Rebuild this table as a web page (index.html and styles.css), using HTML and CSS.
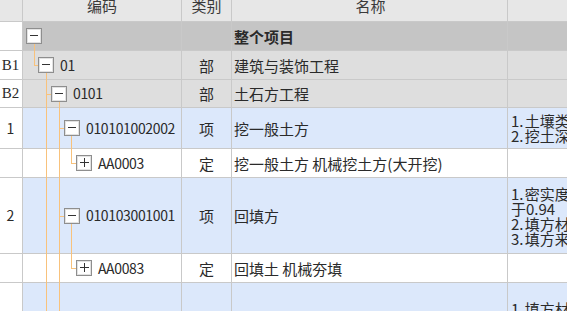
FILE: index.html
```html
<!DOCTYPE html>
<html lang="zh-CN">
<head>
  <meta charset="UTF-8" />
  <title>分部分项工程</title>
  <link rel="stylesheet" href="styles.css">
</head>
<body>

  <div class="sheet">
    <div class="row head">
      <div class="c num"></div>
      <div class="c code">编码</div>
      <div class="c kind">类别</div>
      <div class="c name">名称</div>
      <div class="c desc"></div>
    </div>

    <!-- 整个项目 -->
    <div class="row total h29">
      <div class="c num"></div>
      <div class="c code lv0">
        <span class="g gb x0"></span>
        <i class="tg minus"></i>
      </div>
      <div class="c kind"></div>
      <div class="c name"><b>整个项目</b></div>
      <div class="c desc"></div>
    </div>

    <div class="row part h29">
      <div class="c num bn">B1</div>
      <div class="c code lv1">
        <span class="g gt x0"></span><span class="g h x0"></span>
        <span class="g gb x1"></span>
        <i class="tg minus"></i><span class="no">01</span>
      </div>
      <div class="c kind">部</div>
      <div class="c name">建筑与装饰工程</div>
      <div class="c desc"></div>
    </div>

    <div class="row part h28">
      <div class="c num bn">B2</div>
      <div class="c code lv2">
        <span class="g gf x1"></span><span class="g h x1"></span>
        <span class="g gb x2"></span>
        <i class="tg minus"></i><span class="no">0101</span>
      </div>
      <div class="c kind">部</div>
      <div class="c name">土石方工程</div>
      <div class="c desc"></div>
    </div>

    <div class="row item h41">
      <div class="c num">1</div>
      <div class="c code lv3">
        <span class="g gf x1"></span><span class="g gf x2"></span><span class="g h x2"></span>
        <span class="g gb x3"></span>
        <i class="tg minus"></i><span class="no">010101002002</span>
      </div>
      <div class="c kind">项</div>
      <div class="c name">挖一般土方</div>
      <div class="c desc">1. 土壤类别:三类土<br>2. 挖土深度:2m以内</div>
    </div>

    <div class="row quota h29">
      <div class="c num"></div>
      <div class="c code lv4">
        <span class="g gf x1"></span><span class="g gf x2"></span>
        <span class="g gt x3"></span><span class="g h x3"></span>
        <i class="tg plus"></i><span class="no">AA0003</span>
      </div>
      <div class="c kind">定</div>
      <div class="c name">挖一般土方 机械挖土方(大开挖)</div>
      <div class="c desc"></div>
    </div>

    <div class="row item h76">
      <div class="c num">2</div>
      <div class="c code lv3">
        <span class="g gf x1"></span><span class="g gf x2"></span><span class="g h x2"></span>
        <span class="g gb x3"></span>
        <i class="tg minus"></i><span class="no">010103001001</span>
      </div>
      <div class="c kind">项</div>
      <div class="c name">回填方</div>
      <div class="c desc">1. 密实度要求:压实系数不小<br>于0.94<br>2. 填方材料品种:素土<br>3. 填方来源、运距:就近</div>
    </div>

    <div class="row quota h29">
      <div class="c num"></div>
      <div class="c code lv4">
        <span class="g gf x1"></span><span class="g gf x2"></span>
        <span class="g gt x3"></span><span class="g h x3"></span>
        <i class="tg plus"></i><span class="no">AA0083</span>
      </div>
      <div class="c kind">定</div>
      <div class="c name">回填土 机械夯填</div>
      <div class="c desc"></div>
    </div>

    <div class="row item last">
      <div class="c num"></div>
      <div class="c code lv3">
        <span class="g gf x1"></span><span class="g gf x2"></span>
      </div>
      <div class="c kind"></div>
      <div class="c name"></div>
      <div class="c desc top">1. 填方材料品种:级配砂石<br>2. 填方来源、运距:外购</div>
    </div>
  </div>

</body>
</html>
```

FILE: styles.css
```css
body {
  margin: 0;
  overflow: hidden;
  background: #fff;
  font-family: "Noto Sans CJK SC", sans-serif;
  font-size: 15px;
  color: #2a2a2a;
}

.sheet {
  width: 800px;
}

.row {
  display: grid;
  grid-template-columns: 23px 159px 50px 276px 292px;
  border-bottom: 1px solid #c9c9c9;
  box-sizing: border-box;
}

.h28 { height: 28px; }
.h29 { height: 29px; }
.h41 { height: 41px; }
.h76 { height: 76px; }
.last { height: 60px; }

.c {
  border-right: 1px solid #c9c9c9;
  display: flex;
  align-items: center;
  white-space: nowrap;
  overflow: hidden;
  line-height: 15px;
}

/* column header, scrolled a little out of view */
.head {
  height: 22px;
  background: #e7e7e7;
}

.head .c {
  justify-content: center;
  align-items: flex-start;
  line-height: 11px;
  color: #3a3a3a;
}

.total { background: #c5c5c5; }
.part { background: #dedede; }
.item { background: #dce8fb; }
.quota { background: #fff; }

.num {
  background: #fff;
  justify-content: center;
  font-size: 14px;
  padding-right: 1px;
}

.head .num { background: #e7e7e7; }

.bn {
  font-family: "Liberation Serif", serif;
  font-size: 15px;
}

.kind {
  justify-content: center;
}

.name {
  padding-left: 2px;
}

.name b {
  font-weight: bold;
}

.desc {
  padding-left: 3px;
  word-spacing: -2px;
}

.desc.top {
  align-items: flex-start;
  padding-top: 18px;
}

/* tree column */
.code {
  position: relative;
  overflow: visible;
}

.lv0 { padding-left: 3px; }
.lv1 { padding-left: 15px; }
.lv2 { padding-left: 28px; }
.lv3 { padding-left: 41px; }
.lv4 { padding-left: 53px; }

.no {
  margin-left: 6px;
  font-size: 14px;
  letter-spacing: -0.35px;
}

/* guide lines */
.g {
  position: absolute;
  width: 1px;
  background: #f8c27c;
}

.gf { top: 0; bottom: -1px; }
.gt { top: 0; height: 50%; }
.gb { top: 50%; bottom: -1px; }

.g.h {
  top: 50%;
  height: 1px;
  width: 5px;
}

.x0 { left: 11px; }
.x1 { left: 23px; }
.x2 { left: 36px; }
.x3 { left: 48px; }

.g.h.x0 { width: 4px; }

/* expand / collapse toggle */
.tg {
  position: relative;
  z-index: 1;
  flex: none;
  width: 14px;
  height: 14px;
  border: 1px solid #8e8e8e;
  box-shadow: inset 0 0 0 1px #e2e2e2;
  background: #fff;
}

.tg::before,
.tg::after {
  content: "";
  position: absolute;
  background: #333;
}

.tg::before {
  left: 3px;
  top: 6px;
  width: 8px;
  height: 1px;
}

.tg.plus::after {
  left: 7px;
  top: 2px;
  width: 1px;
  height: 9px;
}

.tg.plus::before {
  left: 3px;
  top: 6px;
  width: 9px;
}
```
